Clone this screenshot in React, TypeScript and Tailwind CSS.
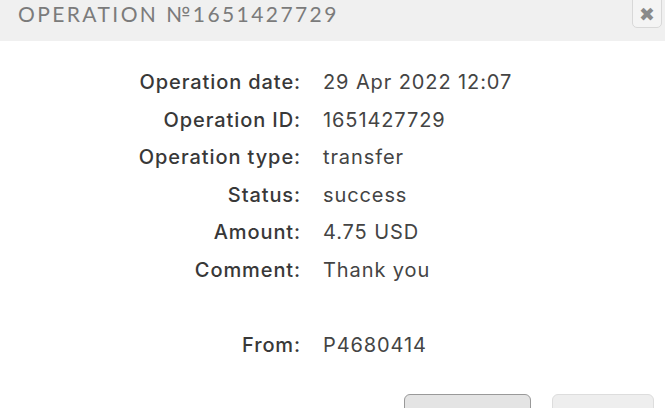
export default function App() {
  const rows: [string, string][] = [
    ["Operation date:", "29 Apr 2022 12:07"],
    ["Operation ID:", "1651427729"],
    ["Operation type:", "transfer"],
    ["Status:", "success"],
    ["Amount:", "4.75 USD"],
    ["Comment:", "Thank you"],
  ]

  return (
    <div className="relative h-[408px] w-[665px] overflow-hidden bg-white font-['Inter',sans-serif]">
      {/* Header */}
      <div className="relative flex h-[41px] items-start bg-[#f0f0f0] pl-[18px] pt-[1px]">
        <h1 className="font-['Lato',sans-serif] text-[21px] leading-[26px] tracking-[0.115em] text-[#7b7b7b] uppercase">
          Operation №1651427729
        </h1>
        <button className="absolute right-[3px] top-[-6px] flex h-[34px] w-[30px] items-center justify-center rounded-[5px] border border-[#d8d8d8] bg-[#f4f4f4] pt-[6px] text-[19px] leading-none text-[#8a8a8a]">
          ✖
        </button>
      </div>

      {/* Details */}
      <div className="grid grid-cols-[301px_1fr] gap-x-[22px] gap-y-[11px] pt-[28px] text-[20px] leading-[26.5px] tracking-[0.045em]">
        {rows.map(([label, value]) => (
          <div key={label} className="contents">
            <div className="text-right font-medium text-[#383838]">{label}</div>
            <div className="text-[#444]">{value}</div>
          </div>
        ))}
        <div className="h-[26.5px]" />
        <div />
        <div className="text-right font-medium text-[#383838]">From:</div>
        <div className="text-[#444]">P4680414</div>
      </div>

      {/* Buttons */}
      <div className="absolute left-[404px] top-[394px] flex gap-[21px]">
        <button className="h-[40px] w-[127px] rounded-[6px] border border-[#999] bg-[#e4e4e4]" />
        <button className="h-[40px] w-[102px] rounded-[6px] border border-[#ddd] bg-[#eeeeee]" />
      </div>
    </div>
  )
}
